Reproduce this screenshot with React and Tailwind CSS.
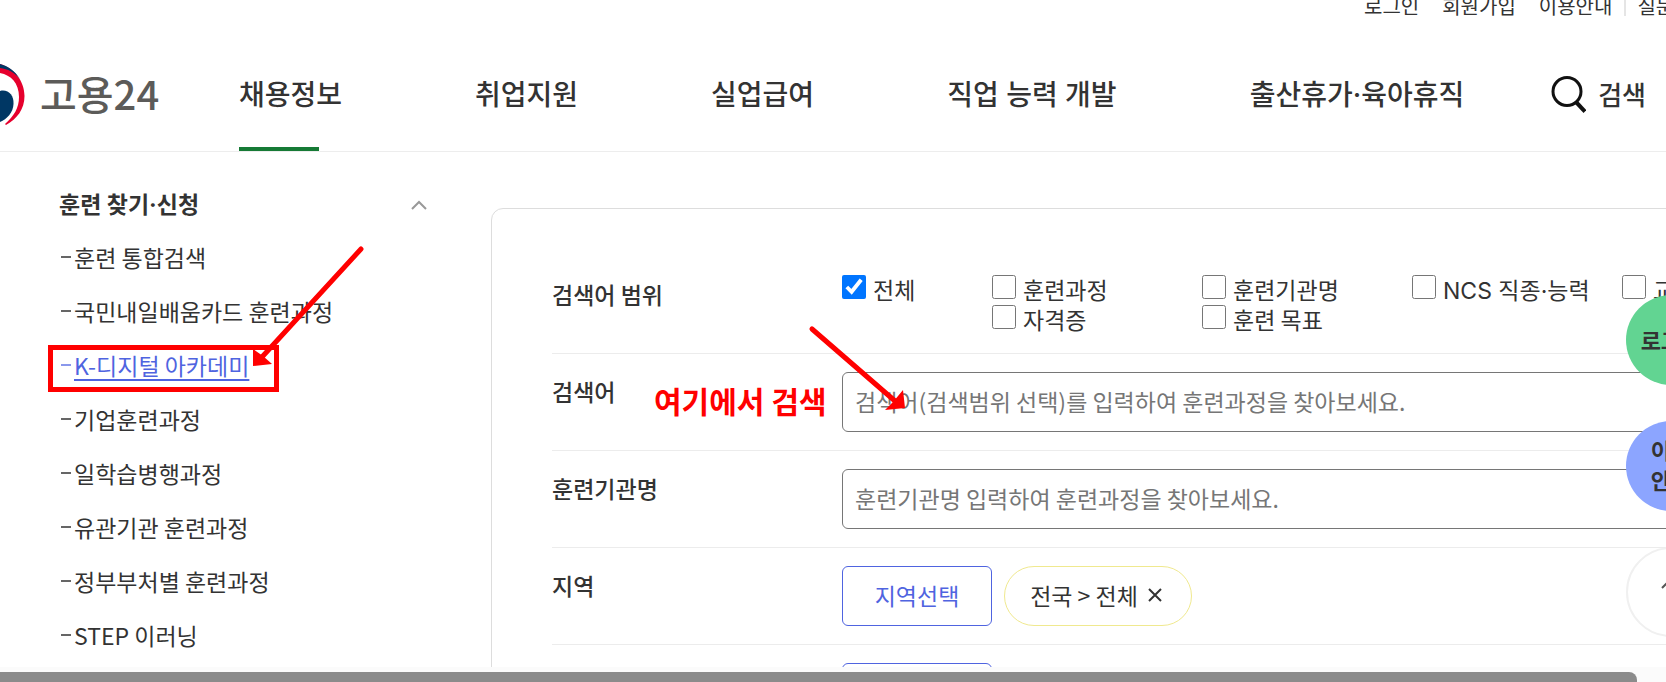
import { useState } from "react";

const utilLinks = ["로그인", "회원가입", "이용안내"];

const navItems = [
  "채용정보",
  "취업지원",
  "실업급여",
  "직업 능력 개발",
  "출산휴가·육아휴직",
];

const sideItems = [
  "훈련 통합검색",
  "국민내일배움카드 훈련과정",
  "K-디지털 아카데미",
  "기업훈련과정",
  "일학습병행과정",
  "유관기관 훈련과정",
  "정부부처별 훈련과정",
  "STEP 이러닝",
];

const rangos = [
  { id: "all", label: "전체" },
  { id: "course", label: "훈련과정" },
  { id: "org", label: "훈련기관명" },
  { id: "ncs", label: "NCS 직종·능력" },
  { id: "teacher", label: "교강사" },
  { id: "license", label: "자격증", className: "col-start-2" },
  { id: "goal", label: "훈련 목표" },
];

const Logo = () => (
  <a href="#" className="flex w-[239px] shrink-0 items-center gap-[14px]">
    <svg width="26" height="68" viewBox="0 -4 26 68" aria-hidden="true">
      <path d="M0 1C14 5 24.500 18 24.500 33C24.500 46 17 56 6 62L5 61C14 53 19 45 19 34C19 20 11 12 0 10Z" fill="#e6002d" />
      <path d="M0 1C8 3 15 8 20 16C14 9 8 6 0 5Z" fill="#003764" />
      <path d="M0 28C8 26 14 32 13.500 41C13 50 7 56 0 59Z" fill="#003764" />
    </svg>
    <span className="text-[40px] leading-[60px] font-medium text-[#5c5b59]">
      고용24
    </span>
  </a>
);

const Header = () => (
  <header className="shrink-0 border-b border-[#ededed]">
    <div className="flex h-5 items-end justify-end overflow-hidden">
      <div className="flex w-[302px] shrink-0 items-end gap-[23px] overflow-hidden text-xl leading-7 whitespace-nowrap">
        {utilLinks.map((link) => (
          <a key={link} href="#">
            {link}
          </a>
        ))}
        <a href="#" className="-ml-[11px] flex items-center gap-[11px]">
          <span className="h-5 w-[2px] bg-[#e5e5e5]" />
          질문
        </a>
      </div>
    </div>

    <div className="flex h-[131px] items-stretch whitespace-nowrap">
      <div className="flex pt-[14px]">
        <Logo />
      </div>
      <nav className={`flex gap-[133px] text-[28px] leading-10 font-medium ${styles.mixed}`}>
        {navItems.map((item, i) => (
          <a key={item} href="#" className="relative flex items-center pt-[18px]">
            {item}
            {i === 0 && (
              <span className="absolute bottom-0 left-0 h-1 w-20 bg-[#167a35]" />
            )}
          </a>
        ))}
      </nav>
      <button
        type="button"
        className="mr-5 ml-auto flex items-center gap-3 pt-4 text-[26px] font-medium"
      >
        <svg width="36" height="38" viewBox="0 0 36 38" fill="none" stroke="#111" aria-hidden="true">
          <circle cx="17" cy="16.500" r="14" strokeWidth="3" />
          <path d="M26 27L35 36.500" strokeWidth="4" />
        </svg>
        검색
      </button>
    </div>
  </header>
);

const Sidebar = () => (
  <aside className="w-[431px] shrink-0 pt-7 pl-[59px]">
    <button
      type="button"
      className={`flex w-full items-center justify-between pr-1 leading-[50px] font-bold ${styles.mixed}`}
    >
      훈련 찾기·신청
      <svg width="16" height="10" viewBox="0 0 16 10" fill="none" stroke="#999" strokeWidth="2" aria-hidden="true">
        <path d="M1 9L8 2L15 9" />
      </svg>
    </button>
    <ul>
      {sideItems.map((item) => {
        const activo = item.startsWith("K-");
        return (
          <li key={item} className="leading-[54px]">
            <a
              href="#"
              className={`flex items-center gap-[3px] ${activo ? "text-[#4f64e0]" : ""}`}
            >
              <span
                className={`ml-[2px] h-[2px] w-[10px] ${activo ? "bg-[#8a98ec]" : "bg-[#666]"}`}
              />
              <span className={activo ? "underline underline-offset-4" : ""}>
                {item}
              </span>
            </a>
          </li>
        );
      })}
    </ul>
  </aside>
);

const Row = ({ label, htmlFor, children }) => (
  <div className="flex border-b border-[#ececec] py-[18px]">
    <label htmlFor={htmlFor} className="w-[290px] shrink-0 leading-[38px] font-medium">
      {label}
    </label>
    <div className="min-w-0 flex-1">{children}</div>
  </div>
);

const SearchForm = () => {
  const [checked, setChecked] = useState({ all: true });
  const toggle = (id) => setChecked({ ...checked, [id]: !checked[id] });

  return (
    <form className="-mr-[140px] ml-[60px] flex-1 self-start rounded-xl border border-[#ddd] px-[60px] py-12">
      <Row label="검색어 범위">
        <div className="grid grid-cols-[150px_210px_210px_210px_210px] justify-items-start gap-y-[2px] pb-[2px] whitespace-nowrap">
          {rangos.map(({ id, label, className = "" }) => (
            <label key={id} className={`flex h-7 gap-[7px] leading-7 ${className}`}>
              <input
                type="checkbox"
                className="size-6"
                checked={!!checked[id]}
                onChange={() => toggle(id)}
              />
              <span>
                <span className={id === "ncs" ? styles.mixed : ""}>{label}</span>
              </span>
            </label>
          ))}
        </div>
      </Row>
      <Row label="검색어" htmlFor="keyword">
        <input
          id="keyword"
          type="text"
          placeholder="검색어(검색범위 선택)를 입력하여 훈련과정을 찾아보세요."
          className={styles.input}
        />
      </Row>
      <Row label="훈련기관명" htmlFor="orgName">
        <input
          id="orgName"
          type="text"
          placeholder="훈련기관명 입력하여 훈련과정을 찾아보세요."
          className={styles.input}
        />
      </Row>
      <Row label="지역" htmlFor="region">
        <div className="flex gap-3">
          <button id="region" type="button" className={styles.select}>
            지역선택
          </button>
          <button
            type="button"
            className="flex h-[60px] w-[188px] items-center justify-center gap-[10px] rounded-full border border-[#f0e98f] pr-1 pb-[2px]"
          >
            전국 &gt; 전체
            <svg width="14" height="14" viewBox="0 0 14 14" stroke="#333" strokeWidth="2" aria-hidden="true">
              <path d="M1 1L13 13M13 1L1 13" />
            </svg>
          </button>
        </div>
      </Row>
      <Row label="훈련유형" htmlFor="kind">
        <button id="kind" type="button" className={styles.select}>
          유형선택
        </button>
      </Row>
    </form>
  );
};

const QuickMenu = () => (
  <div className="absolute top-[295px] -right-[50px] flex flex-col gap-9 font-bold">
    <button type="button" className="size-[90px] rounded-full bg-[#62d492] pb-[2px] text-[22px]">
      로그인
    </button>
    <button type="button" className="size-[90px] rounded-full bg-[#8ca5ff] pb-1 text-[22px] leading-[30px]">
      이용
      <br />
      안내
    </button>
    <button
      type="button"
      aria-label="위로"
      className="flex size-[90px] justify-center rounded-full border-2 border-[#f0f0f0] bg-white pt-7"
    >
      <svg width="20" height="12" viewBox="0 0 20 12" fill="none" stroke="#555" strokeWidth="2" aria-hidden="true">
        <path d="M1 11L10 2L19 11" />
      </svg>
    </button>
  </div>
);

/* Marcas rojas sobre la pagina */
const Annotations = () => (
  <div className="pointer-events-none absolute inset-0 text-[#ff0000]">
    <div className="absolute top-[345px] left-12 h-[47px] w-[231px] border-5 border-[#ff0000]" />
    <p
      className={`absolute top-[380px] left-[654px] text-3xl leading-[44px] font-bold whitespace-nowrap ${styles.mixed}`}
    >
      여기에서 검색
    </p>
    <svg className="absolute top-0 left-0" width="920" height="420" viewBox="0 0 920 420" aria-hidden="true">
      <g stroke="currentColor" strokeWidth="5" strokeLinecap="round">
        <path d="M361 249L262 357" />
        <path d="M812 329L895 401" />
      </g>
      <g fill="currentColor">
        <path d="M253 349L253 366L272 364L263 356Z" />
        <path d="M903 390L905 408L885 410L893 402Z" />
      </g>
    </svg>
  </div>
);

export default function App() {
  return (
    <div className={styles.page}>
      <Header />
      <main className="flex min-h-0 flex-1 overflow-hidden">
        <Sidebar />
        <div className="flex min-w-0 flex-1 pt-14">
          <SearchForm />
        </div>
      </main>
      <div className="z-10 shrink-0 bg-[#fbfbfb] pt-[5px] pr-[29px]">
        <div className="h-[10px] rounded-tr-lg bg-[#8b8b8b]" />
      </div>
      <QuickMenu />
      <Annotations />
    </div>
  );
}

const styles = {
  page: "relative flex h-screen flex-col overflow-hidden bg-white font-['Noto_Sans_CJK_KR','Noto_Sans_CJK_SC',sans-serif] text-[23px] text-[#333]",
  mixed: "font-['Inter','Noto_Sans_CJK_KR','Noto_Sans_CJK_SC',sans-serif]",
  input:
    "h-[60px] w-full rounded-md border border-[#767676] px-3 pb-[2px] placeholder:text-[#767676]",
  select:
    "h-[60px] w-[150px] rounded-md border border-[#4f64e0] pb-[2px] text-[#4f64e0]",
};
